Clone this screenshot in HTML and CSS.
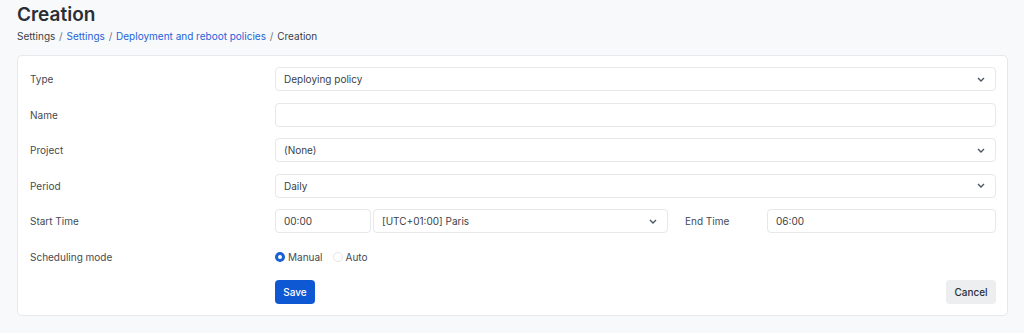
FILE: index.html
```html
<!DOCTYPE html>
<html lang="en">
    <head>
        <meta charset="UTF-8">
        <title>Creation</title>
        <link rel="stylesheet" href="styles.css">
    </head>
    <body>
        <h1 class="page-title">Creation</h1>
        <nav class="crumbs">
            <span>Settings</span>
            <span class="sep">/</span>
            <a href="#">Settings</a>
            <span class="sep">/</span>
            <a href="#">Deployment and reboot policies</a>
            <span class="sep">/</span>
            <span class="current">Creation</span>
        </nav>

        <form class="card">
            <label class="field-label" for="type">Type</label>
            <div class="select">
                <span id="type">Deploying policy</span>
                <svg class="chev" width="8" height="5" viewBox="0 0 8 5"><path d="M1 1l3 3 3-3" fill="none" stroke="#4b5563" stroke-width="1.4"/></svg>
            </div>

            <label class="field-label" for="name">Name</label>
            <div class="input" id="name"></div>

            <label class="field-label" for="project">Project</label>
            <div class="select">
                <span id="project">(None)</span>
                <svg class="chev" width="8" height="5" viewBox="0 0 8 5"><path d="M1 1l3 3 3-3" fill="none" stroke="#4b5563" stroke-width="1.4"/></svg>
            </div>

            <label class="field-label" for="period">Period</label>
            <div class="select">
                <span id="period">Daily</span>
                <svg class="chev" width="8" height="5" viewBox="0 0 8 5"><path d="M1 1l3 3 3-3" fill="none" stroke="#4b5563" stroke-width="1.4"/></svg>
            </div>

            <label class="field-label" for="start">Start Time</label>
            <div class="time-row">
                <div class="input time" id="start">00:00</div>
                <div class="select zone">
                    <span>[UTC+01:00] Paris</span>
                    <svg class="chev" width="8" height="5" viewBox="0 0 8 5"><path d="M1 1l3 3 3-3" fill="none" stroke="#4b5563" stroke-width="1.4"/></svg>
                </div>
                <span class="end-label">End Time</span>
                <div class="input end">06:00</div>
            </div>

            <span class="field-label">Scheduling mode</span>
            <div class="radios">
                <span class="radio"><span class="dot on"></span>Manual</span>
                <span class="radio"><span class="dot"></span>Auto</span>
            </div>

            <span></span>
            <div class="actions">
                <button type="button" class="btn-save">Save</button>
                <button type="button" class="btn-cancel">Cancel</button>
            </div>
        </form>
    </body>
</html>
```

FILE: styles.css
```css
html {
    background-color: #f8f9fb;
}

body {
    margin: 0;
    padding: 3px 17px 0 17px;
    font-family: Inter, "Noto Sans", sans-serif;
    font-size: 10px;
    color: #454a52;
}

.page-title {
    margin: 0;
    font-size: 19px;
    line-height: 24px;
    font-weight: 600;
    color: #2a2e35;
}

.crumbs {
    margin-top: 2px;
    line-height: 14px;
    color: #3a3f47;
}

.crumbs a {
    color: #2563d6;
    text-decoration: none;
}

.crumbs .sep {
    margin: 0 1px;
    color: #6b7280;
}

.card {
    margin-top: 12px;
    width: 967px;
    background: #fff;
    border: 1px solid #e6e8eb;
    border-radius: 5px;
    padding: 11px;
    display: grid;
    grid-template-columns: 246px 1fr;
    row-gap: 11.5px;
    align-items: center;
}

.field-label {
    padding-left: 1px;
    color: #454a52;
}

.input, .select {
    height: 24px;
    box-sizing: border-box;
    border: 1px solid #e6e8eb;
    border-radius: 4px;
    padding: 0 10px 0 8px;
    display: flex;
    align-items: center;
    justify-content: space-between;
    color: #3a3f47;
    background: #fff;
}

.time-row {
    display: flex;
    align-items: center;
}

.time {
    width: 96px;
}

.zone {
    width: 295px;
    margin-left: 2px;
}

.end-label {
    width: 82px;
    margin-left: 17px;
}

.end {
    flex: 1;
}

.radios {
    height: 24px;
    display: flex;
    align-items: center;
    gap: 10px;
}

.radio {
    display: flex;
    align-items: center;
    gap: 3px;
}

.dot {
    width: 10px;
    height: 10px;
    box-sizing: border-box;
    border-radius: 50%;
    border: 1px solid #e3e5e8;
    background: #fff;
}

.dot.on {
    border: 3px solid #1a5fd6;
}

.actions {
    display: flex;
    justify-content: space-between;
}

.btn-save, .btn-cancel {
    height: 24px;
    border: none;
    border-radius: 4px;
    font-family: inherit;
    font-size: 10px;
    font-weight: 500;
    padding: 0;
}

.btn-save {
    width: 40px;
    background-color: #0f58d4;
    color: #fff;
}

.btn-cancel {
    width: 50px;
    background-color: #eceef0;
    color: #2a2e35;
}
```
